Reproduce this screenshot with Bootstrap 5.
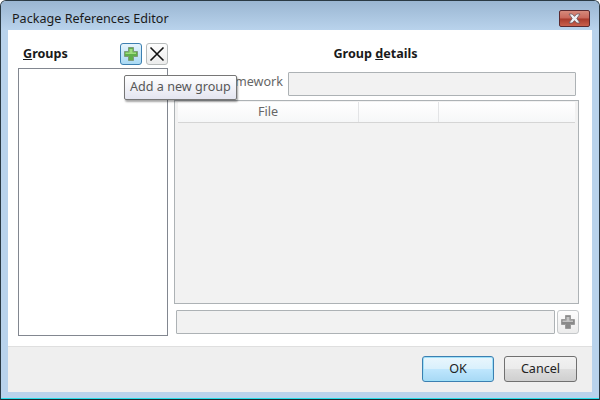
<!DOCTYPE html>
<html lang="en"><head><meta charset="utf-8"><title>Package References Editor</title>
<link href="https://cdn.jsdelivr.net/npm/bootstrap@5.3.0/dist/css/bootstrap.min.css" rel="stylesheet">
<style>
html,body{margin:0;width:600px;height:400px;overflow:hidden;background:#fff}
body{font-family:"Noto Sans",sans-serif;font-size:12.6px;color:#333;line-height:16px}
.win{width:600px;height:400px;border:1px solid #2a3a44;border-bottom:0;border-radius:6px 6px 0 0;background:#b9d3ec;display:flex;flex-direction:column;position:relative;overflow:hidden}
.ttl{height:29px;flex:none;padding:10px 0 0 11px;color:#1a1a1a;background:linear-gradient(#9ab6d2,#b9d3ec);position:relative}
.closer{position:absolute;right:9px;top:9px;width:31px;height:17px;border:1px solid #5a2a30;border-radius:2px;background:linear-gradient(#d68a7c 0,#c9675a 48%,#a83a2c 52%,#c9604c);display:flex;align-items:center;justify-content:center}
.inner{width:584px;height:362px;margin-left:7px;flex:none;background:#fff;display:flex;flex-direction:column}
.work{height:316px;flex:none;display:flex;padding:13px 14px 0 10px}
.lft{width:150px;flex:none;display:flex;flex-direction:column}
.lhead{height:25px;flex:none;display:flex;align-items:flex-start}
.lhead b,.rhead{font-weight:700;color:#1a1a1a}
.lhead b{margin:3px auto 0 5px}
.tbtn{width:22px;height:22px;border:1px solid #b8bcbc;border-radius:3px;background:linear-gradient(#fdfdfd,#ececec);display:flex;align-items:center;justify-content:center;padding:0;flex:none}
.tbtn.hot{border-color:#3c7fb1;background:linear-gradient(#e6f4fc,#a9d9f4);margin-right:4px}
.lbox{height:268px;flex:none;border:1px solid #828790;background:#fff}
.rgt{width:406px;margin-left:6px;flex:none;display:flex;flex-direction:column}
.rhead{height:29px;flex:none;text-align:center;padding:3px 3px 0 0}
.frow{display:flex;justify-content:flex-end;align-items:flex-start;height:24px;flex:none;margin-right:4px;gap:5px;color:#666}
.frow span{margin-top:2px}
.fld{border:1px solid #adb2b5;background:#f2f2f2;border-radius:1px}
.frow .fld{width:288px;height:24px}
.grid1{height:204px;flex:none;margin:4px 1px 0 0;border:1px solid #adb2b5;background:#f2f2f2;padding:1px 3px}
.ghead{display:flex;height:21px;background:linear-gradient(#fff,#f6f7f8);border-bottom:1px solid #d5d5d5;color:#666}
.ghead div{border-right:1px solid #e3e4e6;text-align:center;padding-top:2px}
.ghead .c1{width:181px}.ghead .c2{width:80px}.ghead .c3{flex:1;border-right:0}
.brow{display:flex;margin-top:6px;padding-left:2px;align-items:flex-start}
.brow .fld{width:379px;height:24px;margin-right:2px}
.brow .tbtn{width:22px;height:24px;border-color:#c5c8ca}
.foot{flex:1;background:#efefef;border-top:1px solid #dfdfdf;display:flex;justify-content:flex-end;align-items:flex-start;padding:9px 15px 0 0;gap:10px}
.dbtn{height:26px;width:73px;padding:0;font-size:12.6px;color:#222;border:1px solid #707070;border-radius:3px;background:linear-gradient(#f2f2f2 0,#ebebeb 48%,#dddddd 52%,#cfcfcf)}
.dbtn.def{width:72px;border-color:#3c7fb1;background:linear-gradient(#eaf6fd 0,#d9f0fc 48%,#bee6fd 52%,#a7d9f5);box-shadow:inset 0 0 0 1px #9fe0f8}
.tipbox{position:absolute;left:124px;top:75px;height:25px;padding:3px 5px;border:1px solid #767676;border-radius:2px;background:linear-gradient(#fff,#e4e5f0);box-shadow:1px 2px 2px rgba(0,0,0,.35);color:#575757;white-space:nowrap}
.edge{position:absolute;left:0;right:0;bottom:0;height:2px;background:linear-gradient(#26dde8 50%,#1f2a30 50%)}
</style></head><body>
<div class="win">
 <div class="ttl">Package References Editor
  <div class="closer"><svg width="15" height="11" viewBox="0 0 15 11"><path d="M2 1h3.2L7.5 3.4 9.8 1H13L9.8 5.5 13 10H9.8L7.5 7.6 5.2 10H2L5.2 5.5z" fill="#eef0f4" stroke="#6a5860" stroke-width=".8"/></svg></div>
 </div>
 <div class="inner">
  <div class="work">
   <div class="lft">
    <div class="lhead"><b><u>G</u>roups</b>
     <button class="tbtn hot" type="button"><svg width="16" height="16" viewBox="0 0 16 16"><path d="M5.5 1.5h5v4h4v5h-4v4h-5v-4h-4v-5h4z" fill="#5fb04a" stroke="#7f9a7b"/><path d="M6.5 3h3v3.5h3.5V8H2.5V6.5h4z" fill="#9fdc80"/></svg></button>
     <button class="tbtn" type="button"><svg width="16" height="16" viewBox="0 0 16 16"><path d="M1.5 1.5 14.5 14.5M14.5 1.5 1.5 14.5" stroke="#111" stroke-width="1.6"/></svg></button>
    </div>
    <div class="lbox"></div>
   </div>
   <div class="rgt">
    <div class="rhead">Group <u>d</u>etails</div>
    <div class="frow"><span>Target framework</span><div class="fld"></div></div>
    <div class="grid1"><div class="ghead"><div class="c1">File</div><div class="c2"></div><div class="c3"></div></div></div>
    <div class="brow"><div class="fld"></div><button class="tbtn" type="button"><svg width="16" height="16" viewBox="0 0 16 16"><path d="M5.5 1.5h5v4h4v5h-4v4h-5v-4h-4v-5h4z" fill="#8a8a8a" stroke="#9a9a9a"/><path d="M6.5 3h3v3.5h3.5V8H2.5V6.5h4z" fill="#c4c4c4"/></svg></button></div>
   </div>
  </div>
  <div class="foot"><button class="dbtn def" type="button">OK</button><button class="dbtn" type="button">Cancel</button></div>
 </div>
 <div class="edge"></div>
</div>
<div class="tipbox">Add a new group</div>
</body></html>
